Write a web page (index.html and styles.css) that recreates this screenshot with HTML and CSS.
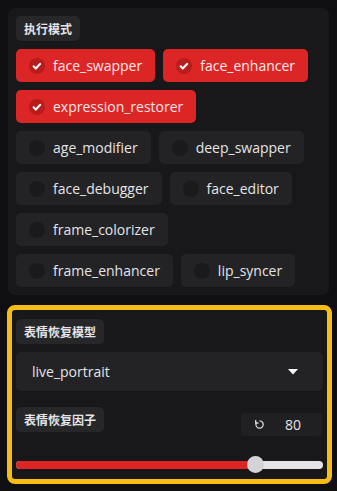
FILE: index.html
```html
<!DOCTYPE html>
<html lang="zh">
<head>
<meta charset="utf-8">
<link rel="stylesheet" href="styles.css">
</head>
<body>
<div class="page">
  <section class="card">
    <span class="label">执行模式</span>
    <div class="choices">
      <span class="chip on"><span class="box"><svg viewBox="0 0 16 16" width="16" height="16"><path d="M4.6 8.3l2.2 2.2 4.4-4.8" fill="none" stroke="#fff" stroke-width="2" stroke-linecap="round" stroke-linejoin="round"/></svg></span>face_swapper</span>
      <span class="chip on"><span class="box"><svg viewBox="0 0 16 16" width="16" height="16"><path d="M4.6 8.3l2.2 2.2 4.4-4.8" fill="none" stroke="#fff" stroke-width="2" stroke-linecap="round" stroke-linejoin="round"/></svg></span>face_enhancer</span>
      <span class="chip on"><span class="box"><svg viewBox="0 0 16 16" width="16" height="16"><path d="M4.6 8.3l2.2 2.2 4.4-4.8" fill="none" stroke="#fff" stroke-width="2" stroke-linecap="round" stroke-linejoin="round"/></svg></span>expression_restorer</span>
      <span class="chip"><span class="box"></span>age_modifier</span>
      <span class="chip"><span class="box"></span>deep_swapper</span>
      <span class="chip"><span class="box"></span>face_debugger</span>
      <span class="chip"><span class="box"></span>face_editor</span>
      <span class="chip"><span class="box"></span>frame_colorizer</span>
      <span class="chip"><span class="box"></span>frame_enhancer</span>
      <span class="chip"><span class="box"></span>lip_syncer</span>
    </div>
  </section>
  <section class="card focus">
    <span class="label">表情恢复模型</span>
    <div class="select">
      <span>live_portrait</span>
      <svg class="caret" viewBox="0 0 10 6" width="10" height="6"><path d="M0 0h10L5 5.5z" fill="#fff"/></svg>
    </div>
    <div class="slider-head">
      <span class="label">表情恢复因子</span>
      <div class="num">
        <svg class="reset" viewBox="0 0 12 12" width="11" height="11"><path d="M3.2 3.2A4 4 0 1 0 6 2" fill="none" stroke="#d4d4d8" stroke-width="1.4"/><path d="M1.8 1.2v3.2h3.2" fill="none" stroke="#d4d4d8" stroke-width="1.4"/></svg>
        <span>80</span>
      </div>
    </div>
    <div class="track">
      <div class="fill" style="width: 78%"></div>
      <div class="thumb"></div>
    </div>
  </section>
</div>
</body>
</html>
```

FILE: styles.css
```css
* { box-sizing: border-box; }
html, body { margin: 0; padding: 0; background: #0f0f11; }
body {
  width: 337px;
  height: 491px;
  overflow: hidden;
  font-family: "Open Sans", "Noto Sans CJK SC", sans-serif;
  color: #e4e4e7;
}
.page {
  padding: 8px 8px 0 8px;
  display: flex;
  flex-direction: column;
}
.card {
  width: 321px;
  background: #18181b;
  border-radius: 7px;
  padding: 8px;
  display: flex;
  flex-direction: column;
  align-items: flex-start;
  gap: 8px;
}
.label {
  display: inline-flex;
  align-items: center;
  height: 25px;
  padding: 0 8px;
  background: #27272a;
  border-radius: 5px;
  font-family: "Noto Sans CJK SC", sans-serif;
  font-weight: 700;
  font-size: 12px;
  color: #e4e4e7;
}
.choices {
  display: flex;
  flex-wrap: wrap;
  gap: 8px;
}
.chip {
  display: inline-flex;
  align-items: center;
  height: 33px;
  padding: 0 13px 0 13px;
  background: #232326;
  border-radius: 5px;
  font-size: 14px;
  color: #e4e4e7;
  gap: 8px;
}
.chip .box {
  width: 16px;
  height: 16px;
  border-radius: 50%;
  background: #1a1a1d;
  display: inline-flex;
  align-items: center;
  justify-content: center;
}
.chip.on {
  background: #dc2626;
  color: #fde8e8;
}
.chip.on .box { background: #b91c1c; }
.focus {
  margin-top: 10px;
  margin-left: -1px;
  width: 325px;
  border: 5px solid #f6bd16;
  border-radius: 8px;
  padding: 9px 4px 10px 4px;
  align-items: stretch;
}
.focus > .label { align-self: flex-start; }
.select {
  height: 39px;
  background: #232326;
  border-radius: 5px;
  display: flex;
  align-items: center;
  justify-content: space-between;
  padding: 0 25px 0 16px;
  font-size: 14px;
  color: #e4e4e7;
}
.caret { margin-top: 1px; }
.slider-head {
  margin-top: 8px;
  display: flex;
  justify-content: space-between;
  align-items: flex-start;
}
.num {
  margin-top: 6px;
  margin-right: 1px;
  width: 81px;
  height: 23px;
  background: #202023;
  border-radius: 4px;
  display: flex;
  align-items: center;
  justify-content: space-between;
  padding: 0 21px 0 13px;
  font-size: 14px;
  color: #e4e4e7;
}
.track {
  position: relative;
  margin-top: 17px;
  height: 8px;
  background: #e4e4e7;
  border-radius: 4px;
}
.fill {
  height: 8px;
  background: #dc2626;
  border-radius: 4px 0 0 4px;
}
.thumb {
  position: absolute;
  left: calc(78% - 8px);
  top: -5px;
  width: 17px;
  height: 17px;
  border-radius: 50%;
  background: #d4d4d8;
}
```
